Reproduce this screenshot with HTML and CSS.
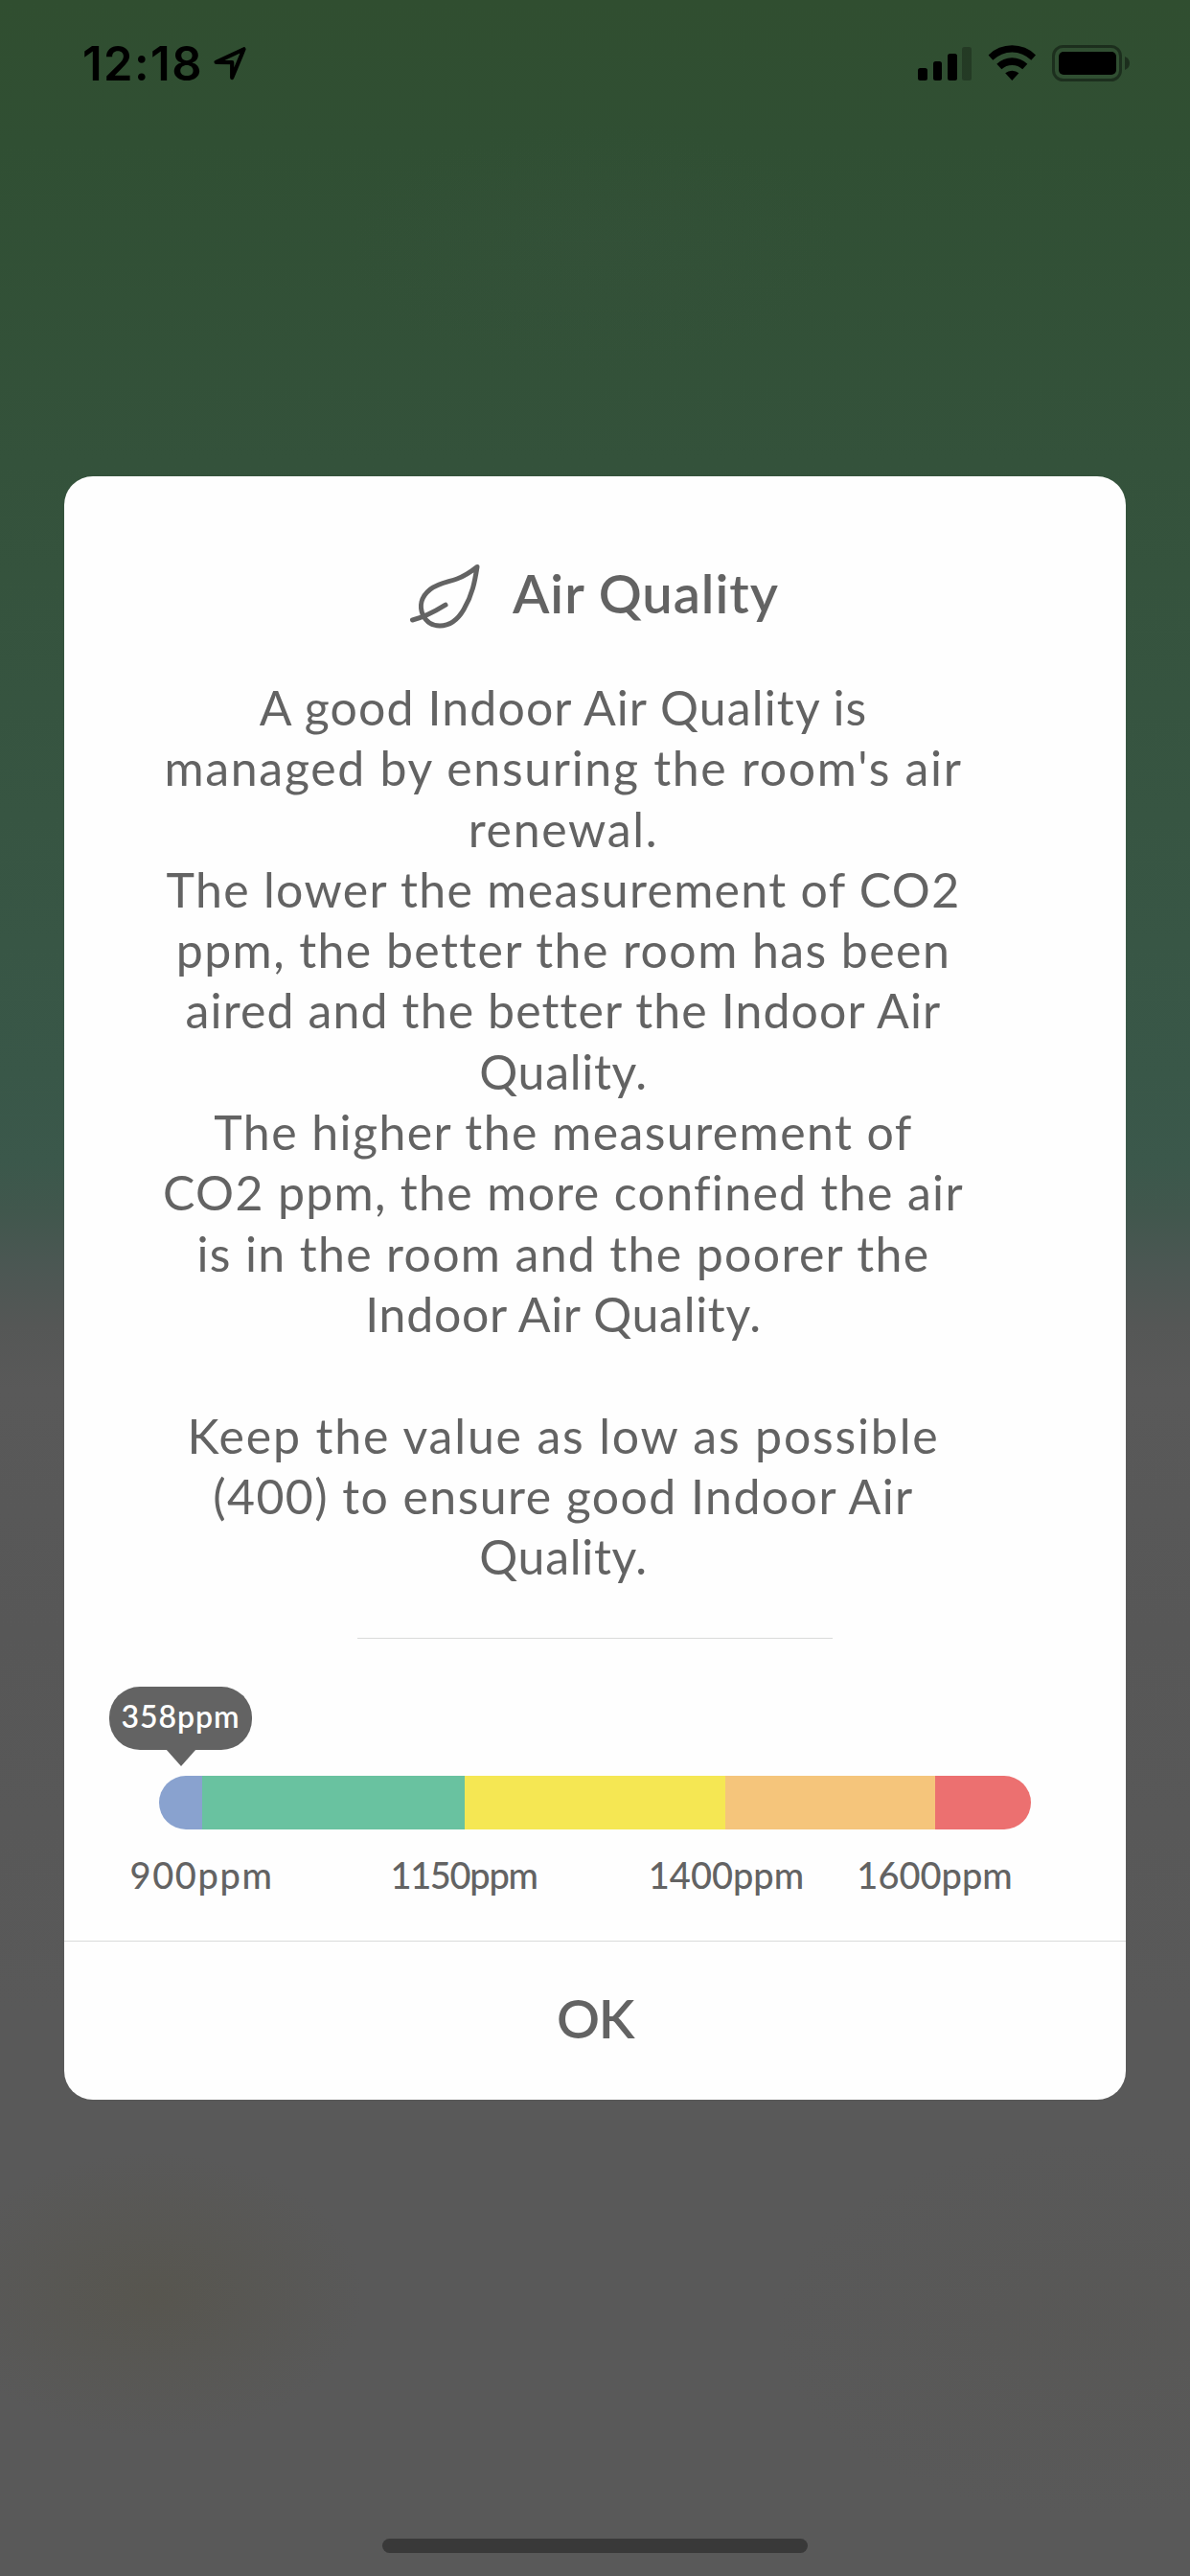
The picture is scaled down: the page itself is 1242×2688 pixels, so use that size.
FILE: index.html
```html
<!DOCTYPE html>
<html lang="en">
<head>
<meta charset="utf-8">
<title>Air Quality</title>
<link rel="stylesheet" href="styles.css">
</head>
<body>
<div class="screen">
  <header class="status">
    <span class="time">12:18</span>
    <svg class="location" width="36" height="38" viewBox="0 0 36 38"><path d="M3.500 17.800 L32.500 4.300 L20.200 34 L20.200 18.200 Z" fill="none" stroke="#000" stroke-width="4.200" stroke-linejoin="round"/></svg>
    <svg class="signals" width="222" height="40" viewBox="0 0 222 40">
      <rect x="0" y="25" width="10" height="13" rx="2.500"/>
      <rect x="16" y="18" width="9" height="20" rx="2.500"/>
      <rect x="31" y="10" width="10" height="28" rx="2.500"/>
      <rect x="46" y="3" width="10" height="35" rx="2.500" opacity="0.25"/>
      <path d="M73.600 11.400 A35 35 0 0 1 123 11.400 L118.300 16.800 A28.300 28.300 0 0 0 78.300 16.800 Z"/>
      <path d="M82.300 20.700 A23 23 0 0 1 114.300 20.700 L109.200 26.300 A15.800 15.800 0 0 0 87.400 26.300 Z"/>
      <path d="M91.200 30.300 A10.800 10.800 0 0 1 105.400 30.300 L98.300 38 Z"/>
      <rect x="141.500" y="2.500" width="70" height="35" rx="10" fill="none" stroke="#000" stroke-width="3" opacity="0.4"/>
      <rect x="147" y="8" width="60" height="24" rx="5"/>
      <path d="M216 13 Q221 15 221 20 Q221 25 216 27 Z" opacity="0.4"/>
    </svg>
  </header>

  <main class="dialog">
    <div class="heading">
      <svg width="76" height="72" viewBox="0 0 76 72" fill="none" stroke="#636363" stroke-width="5" stroke-linecap="round" stroke-linejoin="round">
        <path d="M71 7.500 C64 13 57 17.500 50 20 C40 23.500 31 24 22 31 C12 39 10.500 49 14.500 58 C18 65 24 69 32 69 C42 69 50 64 57 52 C66 37 68.500 23 71 7.500 Z"/>
        <path d="M3.500 63 C14 60.500 23 56.500 38 47.200"/>
      </svg>
      <h1>Air Quality</h1>
    </div>

    <p class="copy">
      <span class="line t1">A good Indoor Air Quality is</span>
      <span class="line t2">managed by ensuring the room's air</span>
      <span class="line t2">renewal.</span>
      <span class="line">The lower the measurement of CO2</span>
      <span class="line t3">ppm, the better the room has been</span>
      <span class="line t1">aired and the better the Indoor Air</span>
      <span class="line t0">Quality.</span>
      <span class="line t3">The higher the measurement of</span>
      <span class="line">CO2 ppm, the more confined the air</span>
      <span class="line">is in the room and the poorer the</span>
      <span class="line t0">Indoor Air Quality.</span>
      <span class="line">&nbsp;</span>
      <span class="line t4">Keep the value as low as possible</span>
      <span class="line t3">(400) to ensure good Indoor Air</span>
      <span class="line t0">Quality.</span>
    </p>

    <div class="rule"></div>

    <div class="gauge">
      <div class="bubble">358ppm</div>
      <div class="bar">
        <i class="blue"></i><i class="green"></i><i class="yellow"></i><i class="orange"></i><i class="red"></i>
      </div>
      <div class="ticks">
        <span class="tick a">900ppm</span>
        <span class="tick b">1150ppm</span>
        <span class="tick c">1400ppm</span>
        <span class="tick d">1600ppm</span>
      </div>
    </div>

    <button class="ok">OK</button>
  </main>

  <div class="home"></div>
</div>
</body>
</html>
```
FILE: styles.css
```css
* { box-sizing: border-box; }

body { margin: 0; }

.screen {
  display: flex;
  flex-direction: column;
  width: 1242px;
  height: 2688px;
  font-family: Lato, "Liberation Sans", sans-serif;
  color: #636363;
  background:
    radial-gradient(ellipse 220px 150px at 160px 2395px, rgba(83, 79, 60, 0.35), rgba(83, 79, 60, 0)),
    radial-gradient(ellipse 340px 200px at 1140px 2430px, rgba(83, 80, 70, 0.15), rgba(83, 80, 70, 0)),
    radial-gradient(ellipse 260px 130px at 620px 260px, rgba(56, 82, 62, 0.25), rgba(56, 82, 62, 0)),
    linear-gradient(#304e30 0, #304f33 150px, #34523b 480px, #375542 850px, #395748 1120px, #3b584b 1210px, #41574d 1265px, #4b5753 1320px, #555756 1385px, #595959 1450px, #575757 1700px, #595959 2100px, #595959 100%);
}

.status {
  display: flex;
  height: 497px;
  padding: 0 62px 0 86px;
}

.time {
  width: 136px;
  margin-top: 37px;
  font: 600 49px/60px Inter, sans-serif;
  letter-spacing: 1.4px;
  color: #000;
}

.location { margin-top: 47px; }

.signals {
  margin: 46px 0 0 auto;
}

.dialog {
  display: flex;
  flex-direction: column;
  width: 1108px;
  height: 1694px;
  margin-left: 67px;
  border-radius: 30px;
  background: #fefefe;
  overflow: hidden;
}

.heading {
  display: flex;
  gap: 32px;
  height: 210px;
  padding: 87px 0 0 360px;
}

h1 {
  margin: 1px 0 0;
  font-size: 56px;
  font-weight: 600;
  line-height: 68px;
  letter-spacing: 1px;
}

.copy {
  width: 840px;
  margin: 0 0 0 101px;
  font-size: 50px;
  line-height: 63.3px;
  text-align: center;
  letter-spacing: 1.33px;
}

.line { display: block; white-space: nowrap; }
.t0 { letter-spacing: 0.7px; }
.t1 { letter-spacing: 1.12px; }
.t2 { letter-spacing: 1.69px; }
.t3 { letter-spacing: 1.43px; }
.t4 { letter-spacing: 1.82px; }

.rule {
  width: 496px;
  height: 1px;
  margin: 52.500px 0 0 306px;
  background: #d9dbda;
}

.gauge {
  display: flex;
  flex-direction: column;
  height: 315px;
  padding-top: 50px;
}

.bubble {
  position: relative;
  width: 149px;
  height: 66px;
  margin-left: 47px;
  border-radius: 32px;
  background: #636363;
  color: #fff;
  font-size: 32px;
  font-weight: 600;
  line-height: 62px;
  letter-spacing: 0.9px;
  text-align: center;
}

.bubble::after {
  content: "";
  position: absolute;
  left: 59px;
  top: 65px;
  border: 16px solid transparent;
  border-top: 18px solid #636363;
  border-bottom: 0;
}

.bar {
  display: flex;
  width: 910px;
  height: 56px;
  margin: 27px 0 0 99px;
  border-radius: 30px;
  overflow: hidden;
}

.blue { width: 45px; background: #89a2cf; }
.green { width: 274px; background: #69c2a0; }
.yellow { width: 272px; background: #f5e753; }
.orange { width: 219px; background: #f5c57b; }
.red { flex: 1; background: #ec7070; }

.ticks {
  display: flex;
  margin-top: 23px;
  font-size: 38px;
  font-weight: 500;
  line-height: 48px;
}

.tick { display: flex; justify-content: center; white-space: nowrap; }
.a { width: 287px; letter-spacing: 1.6px; }
.b { width: 260px; letter-spacing: -1.3px; }
.c { width: 288px; letter-spacing: 0; }
.d { width: 147px; letter-spacing: 0; }

.ok {
  flex: 1;
  padding: 0 0 5px;
  border: 0;
  border-top: 1px solid #d9dbda;
  background: none;
  color: inherit;
  font: 600 56px/66px Lato, sans-serif;
  letter-spacing: -1.5px;
}

.home {
  width: 444px;
  height: 15px;
  margin: auto auto 24px;
  border-radius: 8px;
  background: #393939;
}
```
